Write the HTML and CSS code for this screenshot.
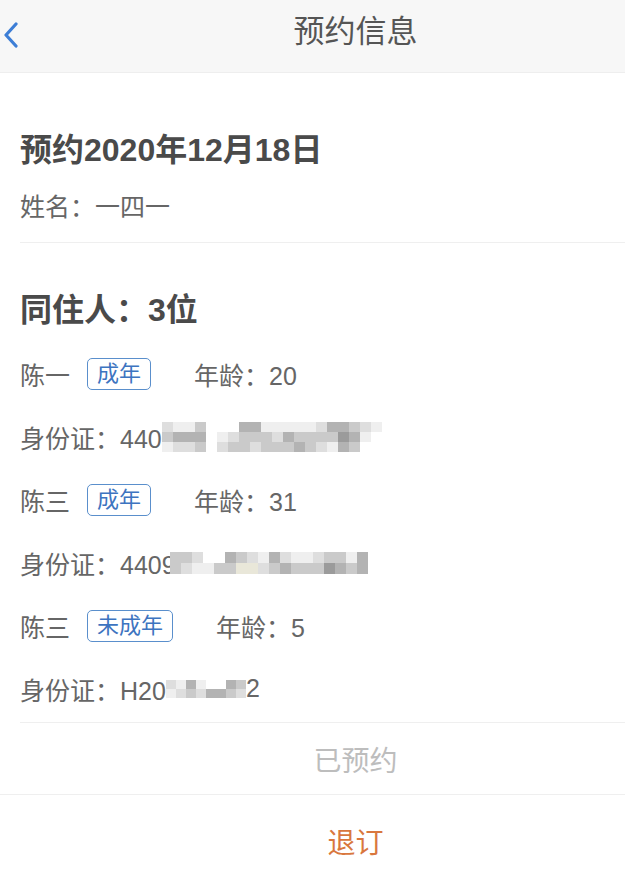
FILE: index.html
```html
<!DOCTYPE html>
<html lang="zh-CN">
<head>
<meta charset="utf-8">
<title>预约信息</title>
<link rel="stylesheet" href="styles.css">
</head>
<body>
<div class="app">
  <header class="topbar">
    <span class="back">
      <svg width="18" height="26" viewBox="0 0 18 26"><polyline points="14,2 4,13 14,24" fill="none" stroke="#3d7ed6" stroke-width="3.2" stroke-linecap="round" stroke-linejoin="round"/></svg>
    </span>
    <h1 class="title">预约信息</h1>
  </header>

  <section class="block block-first">
    <h2 class="heading">预约2020年12月18日</h2>
    <p class="line name">姓名：一四一</p>
  </section>

  <section class="block block-guests">
    <h2 class="heading">同住人：3位</h2>
    <div class="list">
      <div class="row"><span class="who">陈一</span><span class="tag">成年</span><span class="age">年龄：20</span></div>
      <div class="row"><span class="id">身份证：440</span>
        <span class="mosaic m3x20">
          <i class="b"></i><i class="a"></i><i class="a"></i><i class="c"></i><i class="o"></i><i class="o"></i><i class="o"></i><i class="d"></i><i class="d"></i><i class="a"></i><i class="a"></i><i class="a"></i><i class="a"></i><i class="a"></i><i class="b"></i><i class="d"></i><i class="d"></i><i class="c"></i><i class="b"></i><i class="a"></i>
          <i class="c"></i><i class="d"></i><i class="d"></i><i class="d"></i><i class="o"></i><i class="a"></i><i class="b"></i><i class="c"></i><i class="c"></i><i class="c"></i><i class="b"></i><i class="d"></i><i class="c"></i><i class="c"></i><i class="c"></i><i class="c"></i><i class="e"></i><i class="d"></i><i class="a"></i><i class="o"></i>
          <i class="a"></i><i class="b"></i><i class="b"></i><i class="c"></i><i class="o"></i><i class="b"></i><i class="c"></i><i class="c"></i><i class="b"></i><i class="c"></i><i class="c"></i><i class="c"></i><i class="d"></i><i class="c"></i><i class="b"></i><i class="a"></i><i class="d"></i><i class="c"></i><i class="o"></i><i class="o"></i>
        </span>
      </div>
      <div class="row"><span class="who">陈三</span><span class="tag">成年</span><span class="age">年龄：31</span></div>
      <div class="row"><span class="id">身份证：4409</span>
        <span class="mosaic m2x18 shift">
          <i class="c"></i><i class="c"></i><i class="b"></i><i class="o"></i><i class="o"></i><i class="d"></i><i class="c"></i><i class="b"></i><i class="a"></i><i class="d"></i><i class="b"></i><i class="a"></i><i class="a"></i><i class="b"></i><i class="c"></i><i class="c"></i><i class="a"></i><i class="d"></i>
          <i class="c"></i><i class="b"></i><i class="a"></i><i class="a"></i><i class="c"></i><i class="c"></i><i class="y"></i><i class="y"></i><i class="b"></i><i class="c"></i><i class="d"></i><i class="c"></i><i class="c"></i><i class="c"></i><i class="e"></i><i class="d"></i><i class="c"></i><i class="d"></i>
        </span>
      </div>
      <div class="row"><span class="who">陈三</span><span class="tag">未成年</span><span class="age">年龄：5</span></div>
      <div class="row"><span class="id">身份证：H20</span>
        <span class="mosaic m2x8">
          <i class="b"></i><i class="a"></i><i class="d"></i><i class="a"></i><i class="o"></i><i class="o"></i><i class="d"></i><i class="c"></i>
          <i class="a"></i><i class="b"></i><i class="c"></i><i class="b"></i><i class="d"></i><i class="d"></i><i class="c"></i><i class="b"></i>
        </span><span class="id">2</span>
      </div>
    </div>
  </section>

  <div class="status">已预约</div>
  <div class="cancel">退订</div>
</div>
</body>
</html>
```

FILE: styles.css
```css
html, body {
  margin: 0;
  padding: 0;
  background: #fff;
}
.app {
  font-family: "Liberation Sans", "Noto Sans CJK SC", sans-serif;
  color: #666;
}
.topbar {
  box-sizing: border-box;
  height: 73px;
  background: #f7f7f7;
  border-bottom: 1px solid #eeeeee;
  display: grid;
  grid-template-columns: 86px 1fr;
  align-items: start;
}
.back {
  margin-top: 22px;
  margin-left: 2px;
  display: block;
  height: 26px;
}
.back svg { display: block; }
.title {
  margin: 12px 0 0;
  font-size: 31px;
  line-height: 40px;
  font-weight: 400;
  color: #555;
  text-align: center;
}
.block {
  margin-left: 20px;
  border-bottom: 1px solid #efefef;
}
.block-first {
  padding: 57px 0 20px;
}
.block-guests {
  padding: 47px 0 2px;
}
.heading {
  margin: 0;
  font-size: 32px;
  line-height: 40px;
  font-weight: 700;
  color: #4a4a4a;
}
.line {
  margin: 22px 0 0;
  font-size: 25px;
  line-height: 30px;
}
.list {
  margin-top: 12px;
}
.row {
  height: 63px;
  display: flex;
  align-items: center;
  font-size: 25px;
  color: #666;
}
.tag {
  margin-left: 17px;
  box-sizing: border-box;
  height: 32px;
  padding: 0 9px;
  border: 1.5px solid #5a8fcc;
  border-radius: 5px;
  font-size: 22px;
  line-height: 29px;
  color: #3d74c0;
}
.age {
  margin-left: 43px;
}
.mosaic {
  display: grid;
  flex: none;
}
.m3x20 {
  grid-template-columns: repeat(20, 11px);
  grid-template-rows: repeat(3, 10px);
}
.m2x18 {
  grid-template-columns: repeat(18, 11px);
  grid-template-rows: repeat(2, 11px);
}
.m2x8 {
  grid-template-columns: repeat(8, 10px);
  grid-template-rows: repeat(2, 9px);
}
.shift {
  margin-left: -6px;
}
.mosaic i { display: block; }
.mosaic .o { background: #ffffff; }
.mosaic .a { background: #efefef; }
.mosaic .b { background: #dedede; }
.mosaic .c { background: #cacaca; }
.mosaic .d { background: #b3b3b3; }
.mosaic .e { background: #9b9b9b; }
.mosaic .y { background: #e9e7d9; }
.status {
  box-sizing: border-box;
  height: 72px;
  padding-left: 86px;
  border-bottom: 1px solid #efefef;
  display: flex;
  align-items: center;
  justify-content: center;
  font-size: 28px;
  color: #bdbdbd;
}
.cancel {
  box-sizing: border-box;
  height: 92px;
  padding-left: 86px;
  display: flex;
  align-items: center;
  justify-content: center;
  font-size: 28px;
  color: #d9773e;
}
```
